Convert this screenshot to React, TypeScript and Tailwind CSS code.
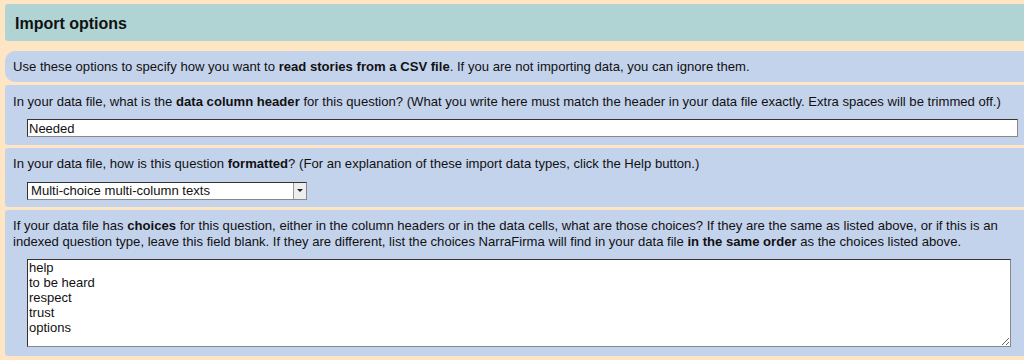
export default function App() {
  return (
    <div className="w-[1024px] h-[360px] overflow-hidden bg-[#fee5c4] pl-[5px] pt-[4px] text-[#111] text-[13.1px] leading-[16px] font-['Liberation_Sans',Arial,sans-serif]">
      <div className="h-[37px] bg-[#b0d4d4] rounded-l-[3px] flex items-center pl-[10px] pt-[3px]">
        <span className="text-[16px] font-bold">Import options</span>
      </div>

      <div className="mt-[10px] h-[31px] bg-[#c4d3ec] rounded-l-[10px] flex items-center pl-[8px]">
        <span>
          Use these options to specify how you want to <b>read stories from a CSV file</b>. If you are not importing data, you can ignore them.
        </span>
      </div>

      <div className="mt-[3px] h-[60px] bg-[#c4d3ec] rounded-l-[3px] pl-[8px] pt-[9px]">
        <div>
          In your data file, what is the <b>data column header</b> for this question? (What you write here must match the header in your data file exactly. Extra spaces will be trimmed off.)
        </div>
        <input
          type="text"
          defaultValue="Needed"
          className="block mt-[9px] ml-[14px] w-[991px] h-[18px] bg-white border border-[#333] border-b-[#888] border-r-[#888] px-[1px] text-[13px] outline-none"
        />
      </div>

      <div className="mt-[3px] h-[59px] bg-[#c4d3ec] rounded-l-[3px] pl-[8px] pt-[8px]">
        <div>
          In your data file, how is this question <b>formatted</b>? (For an explanation of these import data types, click the Help button.)
        </div>
        <div className="mt-[10px] ml-[14px] w-[280px] h-[18px] bg-white border border-[#333] border-b-[#888] border-r-[#888] flex items-center">
          <span className="flex-1 pl-[3px]">Multi-choice multi-column texts</span>
          <span className="w-[13px] h-full bg-[#eee] border-l border-[#999] flex items-center justify-center">
            <svg width="6" height="4" viewBox="0 0 6 4">
              <path d="M0 0h6L3 3z" fill="#222" />
            </svg>
          </span>
        </div>
      </div>

      <div className="mt-[3px] h-[146px] bg-[#c4d3ec] rounded-l-[3px] pl-[8px] pt-[8px]">
        <div>
          If your data file has <b>choices</b> for this question, either in the column headers or in the data cells, what are those choices? If they are the same as listed above, or if this is an
          <br />
          indexed question type, leave this field blank. If they are different, list the choices NarraFirma will find in your data file <b>in the same order</b> as the choices listed above.
        </div>
        <textarea
          defaultValue={"help\nto be heard\nrespect\ntrust\noptions"}
          className="block mt-[9px] ml-[14px] w-[984px] h-[88px] bg-white border border-[#333] border-b-[#888] border-r-[#888] px-[1px] text-[13px] leading-[15px] outline-none resize"
        />
      </div>
    </div>
  );
}
